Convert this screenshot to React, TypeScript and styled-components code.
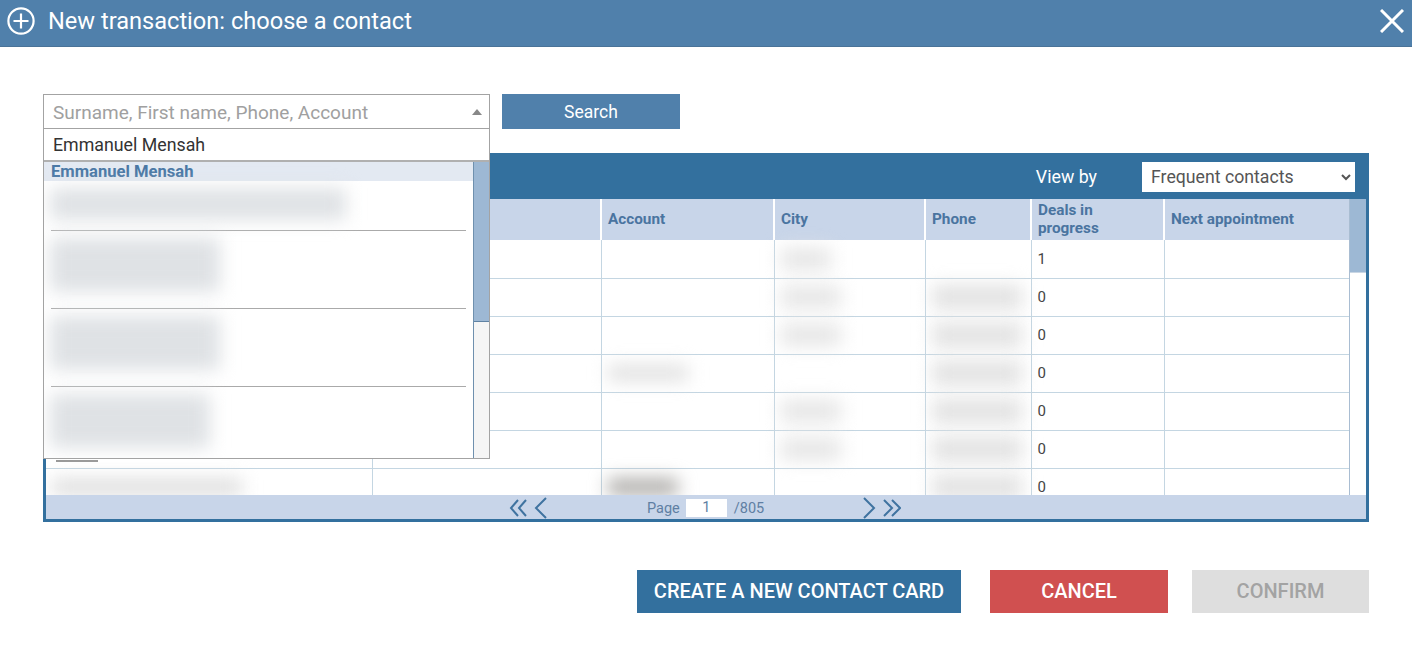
import React from "react";
import styled, { createGlobalStyle } from "styled-components";

const GlobalStyle = createGlobalStyle`
  html, body {
    margin: 0;
    padding: 0;
    background: #fff;
    font-family: Roboto, "Liberation Sans", sans-serif;
  }
`;

const Page = styled.div`
  width: 1412px;
  height: 662px;
  overflow: hidden;
  background: #fff;
`;

const Header = styled.header`
  height: 47px;
  display: flex;
  align-items: center;
  padding: 0 8px 4px 7px;
  gap: 13px;
  color: #fff;
  background: #5080ab;
  border-bottom: 1px solid #4a7398;
  box-sizing: border-box;
`;

const Title = styled.h1`
  flex: 1;
  margin: 0;
  font-size: 23.6px;
  font-weight: 400;
`;

const Content = styled.main`
  padding: 47px 43px 0;
`;

const SearchRow = styled.div`
  display: flex;
  gap: 12px;
  height: 35px;
  margin-bottom: 24px;
`;

const Combo = styled.div`
  position: relative;
  width: 447px;
  z-index: 2;
`;

const ComboInput = styled.div`
  height: 35px;
  box-sizing: border-box;
  border: 1px solid #a3a3a3;
  background: #fff;
  padding: 1px 6px 0 9px;
  display: flex;
  align-items: center;
  justify-content: space-between;
  font-size: 19px;
  color: #a0a0a0;
`;

const ArrowUp = styled.span`
  width: 0;
  height: 0;
  border-left: 5px solid transparent;
  border-right: 5px solid transparent;
  border-bottom: 6px solid #888;
  margin-right: 1px;
`;

const Dropdown = styled.div`
  position: absolute;
  top: 34px;
  left: 0;
  width: 447px;
  height: 331px;
  box-sizing: border-box;
  background: #fff;
  border: 1px solid #a3a3a3;
  display: flex;
  flex-direction: column;
`;

const TypedValue = styled.div`
  height: 33px;
  flex: none;
  box-sizing: border-box;
  border-bottom: 2px solid #b0b0b0;
  padding-left: 9px;
  line-height: 31px;
  font-size: 17.8px;
  color: #333;
`;

const DropdownBody = styled.div`
  flex: 1;
  display: flex;
  min-height: 0;
`;

const ResultList = styled.div`
  flex: 1;
  overflow: hidden;
`;

const ActiveResult = styled.div`
  height: 19px;
  padding-left: 7px;
  background: #e3e9f2;
  color: #4a78a5;
  font-size: 16.6px;
  font-weight: 700;
  line-height: 20px;
`;

const Result = styled.div<{ $height: number }>`
  height: ${(p) => p.$height}px;
  box-sizing: border-box;
  padding: 2px 7px 0 6px;
`;

const Divider = styled.hr`
  margin: 0 7px 0 7px;
  border: 0;
  height: 1px;
  background: #aaa;
`;

const Blur = styled.div<{ $w: number; $h: number; $tone?: string; $top?: number }>`
  width: ${(p) => p.$w}px;
  height: ${(p) => p.$h}px;
  margin-top: ${(p) => p.$top ?? 0}px;
  background: ${(p) => p.$tone ?? "#dfe2e5"};
  filter: blur(9px);
`;

const ListScroll = styled.div`
  width: 16px;
  flex: none;
  background: #f5f5f5;
  border-left: 1px solid #6f90ae;
  box-sizing: border-box;
`;

const ListThumb = styled.div`
  height: 159px;
  background: #9db8d4;
  border-bottom: 1px solid #5f82a3;
`;

const SearchButton = styled.button`
  width: 178px;
  height: 35px;
  border: 0;
  padding: 0;
  background: #5080ab;
  color: #fff;
  font: 400 17.5px Roboto, sans-serif;
`;

const Panel = styled.section`
  width: 1326px;
  height: 369px;
  box-sizing: border-box;
  border: 3px solid #33709e;
  border-top: 0;
  display: flex;
  flex-direction: column;
`;

const Toolbar = styled.div`
  height: 46px;
  flex: none;
  background: #33709e;
  display: flex;
  align-items: center;
  justify-content: flex-end;
  padding: 1px 11px 0 0;
  box-sizing: border-box;
  gap: 45px;
  color: #fff;
  font-size: 17.8px;
  font-weight: 400;
`;

const ViewSelect = styled.select`
  width: 213px;
  height: 30px;
  border: 1px solid #fff;
  border-radius: 0;
  background: #fff;
  color: #555;
  padding-left: 4px;
  font: 400 17.7px Roboto, sans-serif;
`;

const TableArea = styled.div`
  flex: 1;
  min-height: 0;
  display: flex;
`;

const TableClip = styled.div`
  width: 1303px;
  height: 296px;
  overflow: hidden;
`;

const Table = styled.table`
  width: 1303px;
  table-layout: fixed;
  border-collapse: collapse;
`;

const HeadCell = styled.th`
  height: 41px;
  padding: 0 6px 2px;
  box-sizing: border-box;
  background: #c8d5e9;
  border-left: 2px solid #fff;
  color: #4a74a0;
  font-size: 15.3px;
  font-weight: 700;
  line-height: 18px;
  text-align: left;
  &:first-child {
    border-left: 0;
  }
`;

const Cell = styled.td`
  height: 38px;
  padding: 0 6px;
  box-sizing: border-box;
  border-left: 1px solid #c4d6e2;
  border-bottom: 1px solid #c4d6e2;
  color: #444;
  font-size: 15px;
  &:first-child {
    border-left: 0;
  }
`;

const PeekingText = styled.div`
  width: 42px;
  height: 2px;
  margin: 23px 0 0 4px;
  background: #999;
`;

const TableScroll = styled.div`
  width: 17px;
  height: 296px;
  flex: none;
  background: #fff;
  border-left: 1px solid #a9bdd2;
  box-sizing: border-box;
`;

const TableThumb = styled.div`
  height: 73px;
  background: #9db8d4;
  border-bottom: 1px solid #c9d6e4;
`;

const Pager = styled.div`
  height: 24px;
  flex: none;
  background: #c8d5e9;
  display: flex;
  align-items: center;
  padding: 2px 0 0 463px;
  box-sizing: border-box;
  color: #5f7fa3;
  font-size: 14.5px;
`;

const PagerIcon = styled.svg`
  display: block;
  flex: none;
  width: 20px;
  height: 22px;
  fill: none;
  stroke: #3f73a0;
  stroke-width: 2;
`;

const PageLabel = styled.span`
  margin-left: 98px;
`;

const PageInput = styled.span`
  width: 41px;
  height: 18px;
  margin: 0 7px 0 6px;
  background: #fff;
  text-align: center;
  line-height: 18px;
`;

const NextGroup = styled.span`
  display: flex;
  margin-left: 97px;
`;

const Actions = styled.div`
  display: flex;
  justify-content: flex-end;
  width: 1326px;
  margin-top: 48px;
`;

const ActionButton = styled.button<{ $bg: string; $fg: string; $w: number; $gap: number }>`
  width: ${(p) => p.$w}px;
  height: 43px;
  margin-right: ${(p) => p.$gap}px;
  border: 0;
  padding: 0 0 2px;
  background: ${(p) => p.$bg};
  color: ${(p) => p.$fg};
  font: 500 20px Roboto, sans-serif;
`;

const columns = [
  { label: "", width: 326 },
  { label: "", width: 229 },
  { label: "Account", width: 173 },
  { label: "City", width: 151 },
  { label: "Phone", width: 106 },
  { label: "Deals in\nprogress", width: 133 },
  { label: "Next appointment", width: 185 },
];

const rows = [
  { account: 0, city: 50, phone: 0, deals: "1" },
  { account: 0, city: 60, phone: 90, deals: "0" },
  { account: 0, city: 60, phone: 90, deals: "0" },
  { account: 80, city: 0, phone: 90, deals: "0" },
  { account: 0, city: 60, phone: 90, deals: "0" },
  { account: 0, city: 60, phone: 90, deals: "0" },
  { account: 70, city: 0, phone: 90, deals: "0" },
];

const results = [
  { height: 49, w: 296, h: 32 },
  { height: 77, w: 170, h: 54 },
  { height: 77, w: 170, h: 54 },
  { height: 71, w: 160, h: 54 },
];

const chevronPaths = {
  left: { single: "M17 1 7 11l10 10", double: "M9 3 2 11l7 8M17 3l-7 8 7 8" },
  right: { single: "M3 1l10 10L3 21", double: "M3 3l8 8-8 8M11 3l8 8-8 8" },
};

const Chevrons = ({ dir, double }: { dir: "left" | "right"; double?: boolean }) => (
  <PagerIcon viewBox="0 0 20 22">
    <path d={double ? chevronPaths[dir].double : chevronPaths[dir].single} />
  </PagerIcon>
);

export default function App() {
  return (
    <Page>
      <GlobalStyle />
      <Header>
        <svg width="28" height="28" viewBox="0 0 28 28" fill="none" stroke="#fff" strokeWidth="2.2">
          <circle cx="14" cy="14" r="12.6" />
          <path d="M14 6.5v15M6.5 14h15" />
        </svg>
        <Title>New transaction: choose a contact</Title>
        <svg width="24" height="24" viewBox="0 0 24 24" stroke="#fff" strokeWidth="3">
          <path d="M1 1l22 22M23 1 1 23" />
        </svg>
      </Header>
      <Content>
        <SearchRow>
          <Combo>
            <ComboInput>
              Surname, First name, Phone, Account
              <ArrowUp />
            </ComboInput>
            <Dropdown>
              <TypedValue>Emmanuel Mensah</TypedValue>
              <DropdownBody>
                <ResultList>
                  <ActiveResult>Emmanuel Mensah</ActiveResult>
                  {results.map((r, i) => (
                    <React.Fragment key={i}>
                      <Result $height={r.height}>
                        <Blur $w={r.w} $h={r.h} $top={5} />
                      </Result>
                      {i < results.length - 1 && <Divider />}
                    </React.Fragment>
                  ))}
                </ResultList>
                <ListScroll>
                  <ListThumb />
                </ListScroll>
              </DropdownBody>
            </Dropdown>
          </Combo>
          <SearchButton>Search</SearchButton>
        </SearchRow>
        <Panel>
          <Toolbar>
            View by
            <ViewSelect defaultValue="frequent">
              <option value="frequent">Frequent contacts</option>
            </ViewSelect>
          </Toolbar>
          <TableArea>
            <TableClip>
              <Table>
                <colgroup>
                  {columns.map((c, i) => (
                    <col key={i} style={{ width: c.width }} />
                  ))}
                </colgroup>
                <thead>
                  <tr>
                    {columns.map((c, i) => (
                      <HeadCell key={i}>
                        {c.label.split("\n").map((line, j) => (
                          <React.Fragment key={j}>
                            {j > 0 && <br />}
                            {line}
                          </React.Fragment>
                        ))}
                      </HeadCell>
                    ))}
                  </tr>
                </thead>
                <tbody>
                  {rows.map((row, i) => (
                    <tr key={i}>
                      <Cell>
                        {i === 5 && <PeekingText />}
                        {i === 6 && <Blur $w={190} $h={16} $tone="#dcdcdc" />}
                      </Cell>
                      <Cell />
                      <Cell>{row.account > 0 && <Blur $w={row.account} $h={16} $tone={i === 6 ? "#a8a6a3" : "#e0e0e0"} />}</Cell>
                      <Cell>{row.city > 0 && <Blur $w={row.city} $h={22} $tone="#e6e6e6" />}</Cell>
                      <Cell>{row.phone > 0 && <Blur $w={row.phone} $h={24} $tone="#e2e2e2" />}</Cell>
                      <Cell>{row.deals}</Cell>
                      <Cell />
                    </tr>
                  ))}
                </tbody>
              </Table>
            </TableClip>
            <TableScroll>
              <TableThumb />
            </TableScroll>
          </TableArea>
          <Pager>
            <Chevrons dir="left" double />
            <Chevrons dir="left" />
            <PageLabel>Page</PageLabel>
            <PageInput>1</PageInput>
            /805
            <NextGroup>
              <Chevrons dir="right" />
              <Chevrons dir="right" double />
            </NextGroup>
          </Pager>
        </Panel>
        <Actions>
          <ActionButton $bg="#33709e" $fg="#fff" $w={324} $gap={29}>CREATE A NEW CONTACT CARD</ActionButton>
          <ActionButton $bg="#d05050" $fg="#fff" $w={178} $gap={24}>CANCEL</ActionButton>
          <ActionButton $bg="#dedede" $fg="#a3a3a3" $w={177} $gap={0}>CONFIRM</ActionButton>
        </Actions>
      </Content>
    </Page>
  );
}
